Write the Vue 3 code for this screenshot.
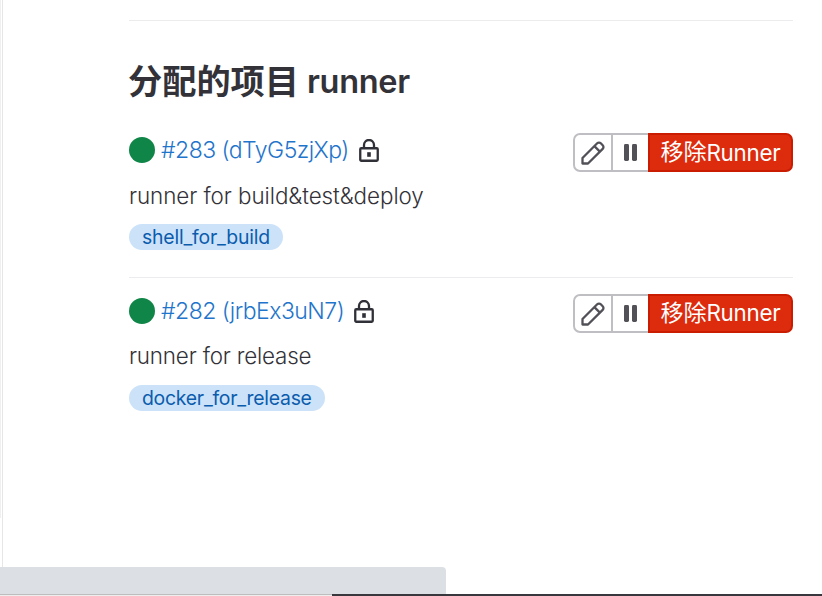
<script setup>
const runners = [
  { id: 283, token: 'dTyG5zjXp', description: 'runner for build&test&deploy', tag: 'shell_for_build', cls: 'first' },
  { id: 282, token: 'jrbEx3uN7', description: 'runner for release', tag: 'docker_for_release', cls: 'second' },
]
</script>

<template>
  <div class="page">
    <aside class="gutter"><span class="track"></span></aside>
    <main class="content">
      <h4 class="title"><span class="title-zh">分配的项目</span> <span class="title-en">runner</span></h4>
      <ul class="runners">
        <li v-for="r in runners" :key="r.id" class="runner" :class="r.cls">
          <div class="info">
            <div class="name">
              <span class="status"></span>
              <a class="link">#{{ r.id }} ({{ r.token }})</a>
              <svg class="lock" viewBox="0 0 20 23">
                <rect x="1.25" y="9.25" width="17.5" height="12.5" rx="1" fill="none" stroke="#303038" stroke-width="2.3" />
                <path d="M5 9V6a5 5 0 0 1 10 0v3" fill="none" stroke="#303038" stroke-width="2.3" />
                <rect x="8.2" y="13.2" width="3.6" height="4.6" fill="#303038" />
              </svg>
            </div>
            <div class="description">{{ r.description }}</div>
            <span class="tag">{{ r.tag }}</span>
          </div>
          <div class="actions">
            <button class="btn edit" aria-label="Edit">
              <svg class="pencil" viewBox="0 0 24 24" fill="none" stroke="#535158" stroke-width="2.3" stroke-linejoin="round">
                <path d="M1.5 22.5V17L16.2 2.3a2.5 2.5 0 0 1 3.6 0l1.9 1.9a2.5 2.5 0 0 1 0 3.6L7 22.5Z" />
                <path d="M13.4 5.1l5.5 5.5" />
              </svg>
            </button>
            <button class="btn pause" aria-label="Pause">
              <svg class="bars" viewBox="0 0 13 17" fill="#535158">
                <rect x="0" y="0" width="5" height="17" rx="1.4" />
                <rect x="8" y="0" width="5" height="17" rx="1.4" />
              </svg>
            </button>
            <button class="btn remove"><span class="remove-zh">移除</span><span class="remove-en">Runner</span></button>
          </div>
        </li>
      </ul>
    </main>
    <footer class="bottom">
      <div class="statusbar"></div>
      <div class="edge"><span class="edge-light"></span></div>
    </footer>
  </div>
</template>

<style>
body { margin: 0; background: #fff; overflow: hidden; }
</style>

<style scoped>
.page {
  box-sizing: border-box;
  display: grid;
  grid-template-columns: 3px 1fr;
  grid-template-rows: 567px 29px;
  width: 822px;
  height: 596px;
  background: #fff;
  color: #333238;
  font-family: Inter, "Noto Sans CJK SC", sans-serif;
}
.gutter { box-sizing: border-box; border-right: 1px solid #e6e6e6; }
.track { display: block; width: 1px; height: 518px; background: #f0f0f0; }
.content { margin: 20px 29px 0 126px; border-top: 1px solid #ececef; }
.title {
  display: flex;
  align-items: center;
  gap: 8px;
  height: 50px;
  margin: 36px 0 0;
  font-size: 34.2px;
  line-height: 50px;
  white-space: nowrap;
}
.title-zh { margin-left: -1px; font-weight: 700; }
.title-en { padding-bottom: 1px; font-weight: 600; font-size: 32.5px; letter-spacing: -0.3px; }
.runners { margin: 0; padding: 0; list-style: none; }
.runner { display: flex; justify-content: space-between; align-items: flex-start; box-sizing: border-box; }
.first { height: 171px; padding-top: 26px; border-bottom: 1px solid #ececef; }
.second { padding-top: 16px; }
.info { display: flex; flex-direction: column; align-items: flex-start; }
.name { display: flex; align-items: center; height: 34px; }
.status { width: 26px; height: 26px; border-radius: 50%; background: #108548; }
.link { margin-left: 6px; color: #1f75cb; font-size: 23px; letter-spacing: -0.52px; line-height: 34px; font-weight: 350; white-space: nowrap; }
.lock { width: 20px; height: 23px; margin-left: 10.5px; }
.second .lock { margin-left: 9.7px; }
.description { margin-top: 13px; height: 32px; line-height: 32px; font-size: 22.4px; letter-spacing: -0.06px; font-weight: 350; white-space: nowrap; }
.second .description { margin-top: 12px; margin-bottom: 1px; letter-spacing: -0.18px; }
.tag {
  height: 26px;
  margin-top: 12px;
  padding: 0 13px;
  border-radius: 13px;
  background: #cbe2f9;
  color: #0b5cad;
  font-size: 19.4px;
  font-weight: 400;
  letter-spacing: -0.25px;
  line-height: 26px;
  white-space: nowrap;
}
.first .tag { letter-spacing: -0.19px; }
.actions { display: flex; height: 39px; }
.btn {
  box-sizing: border-box;
  display: flex;
  align-items: center;
  justify-content: center;
  height: 39px;
  margin: 0;
  padding: 0;
  border: 2px solid #bfbfc3;
  background: #fff;
  font-family: inherit;
}
.edit { width: 40px; border-radius: 7px 0 0 7px; }
.pause { width: 35px; border-left: 0; border-right: 0; }
.pencil { width: 24px; height: 24px; }
.bars { width: 13px; height: 17px; margin-right: 1px; }
.remove {
  width: 145px;
  border-color: #c91c00;
  border-radius: 0 7px 7px 0;
  background: #dd2b0e;
  color: #fff;
  font-size: 23px;
  line-height: 33px;
  white-space: nowrap;
}
.remove-en { font-size: 22.4px; letter-spacing: -0.25px; }
.second .remove-en { padding-bottom: 2px; }
.bottom { grid-column: 1 / 3; }
.statusbar { width: 446px; height: 27px; border-radius: 0 4px 0 0; background: #dce0e5; }
.edge { height: 2px; background: #38373d; }
.edge-light { display: block; box-sizing: border-box; width: 332px; height: 2px; border-top: 1px solid #bdbdbd; background: #eee; }
</style>
